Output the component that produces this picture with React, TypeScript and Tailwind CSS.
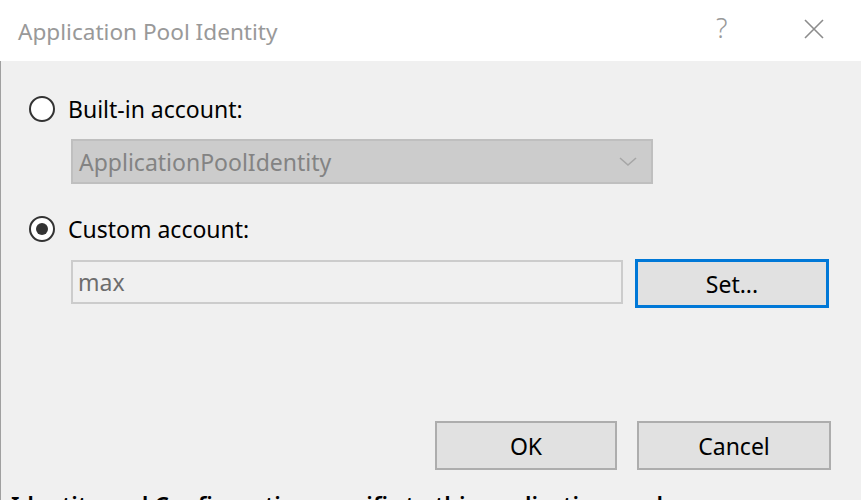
import React from "react";

const font = { fontFamily: '"Noto Sans", "Open Sans", sans-serif' };

function Radio({ checked }: { checked?: boolean }) {
  return (
    <div className="w-[26px] h-[26px] rounded-full border-2 border-[#333333] bg-white flex items-center justify-center shrink-0">
      {checked && <div className="w-[12px] h-[12px] rounded-full bg-[#333333]" />}
    </div>
  );
}

export default function App() {
  return (
    <div className="w-[861px] h-[500px] overflow-hidden flex flex-col bg-[#f0f0f0]" style={font}>
      <div className="h-[61px] shrink-0 bg-white flex items-center relative">
        <span className="ml-[18px] mt-[2px] text-[22.6px] leading-[30px] text-[#999999]">Application Pool Identity</span>
        <span className="absolute left-[716px] top-[10px] text-[27px] leading-[36px] text-[#999999] font-light">?</span>
        <svg className="absolute left-[804px] top-[19px]" width="20" height="20" viewBox="0 0 20 20">
          <path d="M1 1 L19 19 M19 1 L1 19" stroke="#8c8c8c" strokeWidth="1.6" fill="none" />
        </svg>
      </div>
      <div className="flex-1 flex flex-col border-l border-[#a0a0a0] pl-[28px]">
        <div className="mt-[35px] h-[26px] flex items-center gap-[13px]">
          <Radio />
          <span className="text-[23px] leading-[26px] text-black">Built-in account:</span>
        </div>
        <div className="mt-[17px] ml-[42px] w-[582px] h-[45px] bg-[#cccccc] border-2 border-[#bfbfbf] flex items-center justify-between pl-[6px] pr-[14px]">
          <span className="text-[23px] leading-[30px] text-[#838383]">ApplicationPoolIdentity</span>
          <svg width="18" height="10" viewBox="0 0 18 10">
            <path d="M1 1 L9 8 L17 1" stroke="#a6a6a6" strokeWidth="1.6" fill="none" />
          </svg>
        </div>
        <div className="mt-[32px] h-[26px] flex items-center gap-[13px]">
          <Radio checked />
          <span className="text-[23px] leading-[26px] text-black">Custom account:</span>
        </div>
        <div className="mt-[17px] flex items-start">
          <div className="ml-[42px] mt-[1px] w-[552px] h-[44px] border-2 border-[#cccccc] bg-[#f0f0f0] flex items-center pl-[5px]">
            <span className="text-[23px] leading-[30px] text-[#6d6d6d]">max</span>
          </div>
          <button className="ml-[12px] w-[194px] h-[49px] border-[3px] border-[#0078d7] bg-[#e1e1e1] text-[23px] leading-[30px] text-black flex items-center justify-center">
            Set...
          </button>
        </div>
        <div className="mt-[113px] flex justify-end gap-[20px] pr-[30px]">
          <button className="w-[182px] h-[49px] border-2 border-[#adadad] bg-[#e1e1e1] text-[23px] leading-[30px] text-black flex items-center justify-center">
            OK
          </button>
          <button className="w-[194px] h-[49px] border-2 border-[#adadad] bg-[#e1e1e1] text-[23px] leading-[30px] text-black flex items-center justify-center">
            Cancel
          </button>
        </div>
        <div className="mt-[22px] h-[8px] shrink-0 overflow-hidden -ml-[28px] pl-[10px] pt-[1px]">
          <div className="text-[23px] leading-[24px] font-semibold text-black whitespace-nowrap">
            Identity and Configuration specific to this application pool
          </div>
        </div>
      </div>
    </div>
  );
}
